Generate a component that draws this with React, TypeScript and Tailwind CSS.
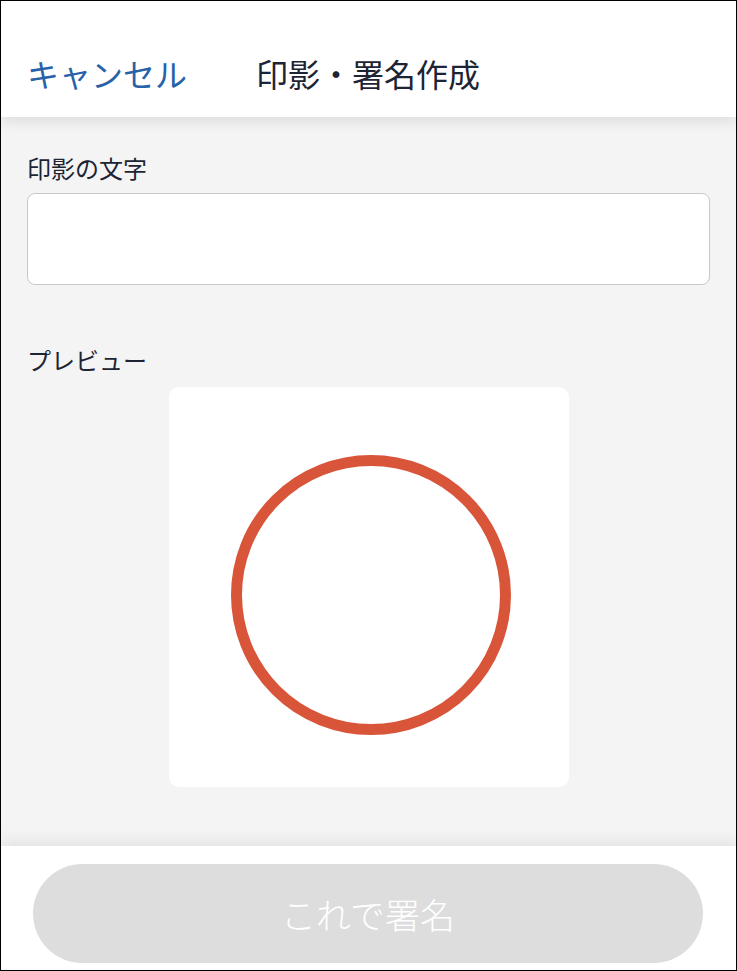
import React from "react";

export default function App() {
  const font = { fontFamily: '"Noto Sans CJK JP", "Noto Sans", sans-serif' };
  return (
    <div
      className="w-[737px] h-[971px] border border-black flex flex-col overflow-hidden bg-white"
      style={font}
    >
      <header className="h-[116px] shrink-0 bg-white relative z-10 shadow-[0_4px_14px_rgba(0,0,0,0.10)] flex items-start pt-[56px] pl-[26px]">
        <span className="text-[32px] leading-none font-normal text-[#2762a9]">キャンセル</span>
        <span className="ml-[69px] text-[32px] leading-none font-normal text-[#1d2433]">印影・署名作成</span>
      </header>
      <main className="flex-1 bg-[#f4f4f4] px-[26px] pt-[39px] flex flex-col">
        <div className="text-[24px] leading-none font-normal text-[#1d2433]">印影の文字</div>
        <div className="mt-[13px] h-[92px] bg-white border border-[#c8c8c8] rounded-[8px]" />
        <div className="mt-[63px] text-[24px] leading-none font-normal text-[#1d2433]">プレビュー</div>
        <div className="mt-[15px] self-center w-[400px] h-[400px] bg-white rounded-[10px]">
          <svg width="400" height="400" viewBox="0 0 400 400">
            <circle cx="202" cy="208" r="134.5" fill="none" stroke="#d9553a" strokeWidth="11" />
          </svg>
        </div>
      </main>
      <footer className="h-[124px] shrink-0 bg-white relative z-10 shadow-[0_-4px_14px_rgba(0,0,0,0.08)] px-[32px] pt-[18px]">
        <button className="w-[670px] h-[99px] rounded-full bg-[#dddddd] text-white text-[35px] leading-none font-light flex items-center justify-center">
          これで署名
        </button>
      </footer>
    </div>
  );
}
